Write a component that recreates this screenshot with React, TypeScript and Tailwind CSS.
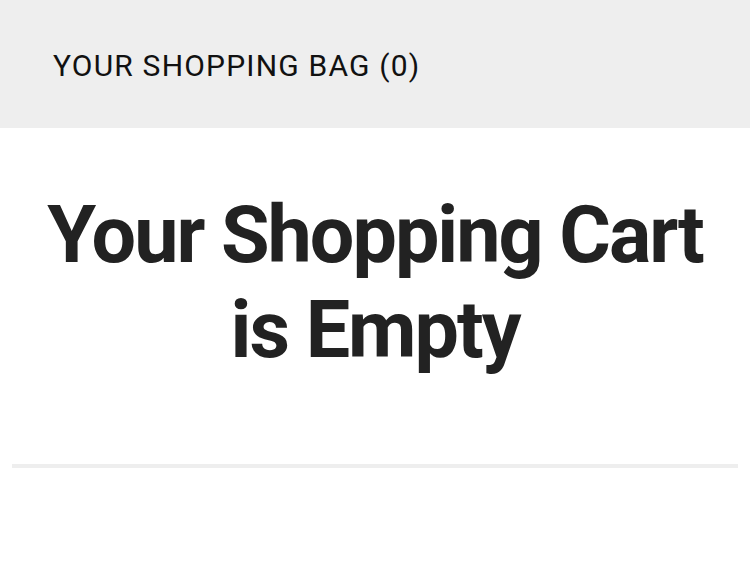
export default function App() {
  return (
    <div className="min-h-[562px] w-full bg-white" style={{ fontFamily: "Roboto, 'Noto Sans', sans-serif" }}>
      <header className="h-[128px] bg-[#eeeeee] pl-[53px] pt-[48px]">
        <h2 className="text-[30px] font-normal leading-[36px] tracking-[1.2px] text-[#111111] whitespace-nowrap">
          YOUR SHOPPING BAG (0)
        </h2>
      </header>
      <main className="px-3">
        <h1 className="mt-[60px] text-center text-[79px] font-bold leading-[95px] tracking-[-2px] text-[#222222]">
          Your Shopping Cart
          <br />
          is Empty
        </h1>
        <hr className="mt-[86px] h-[4px] border-0 bg-[#eeeeee]" />
      </main>
    </div>
  );
}
